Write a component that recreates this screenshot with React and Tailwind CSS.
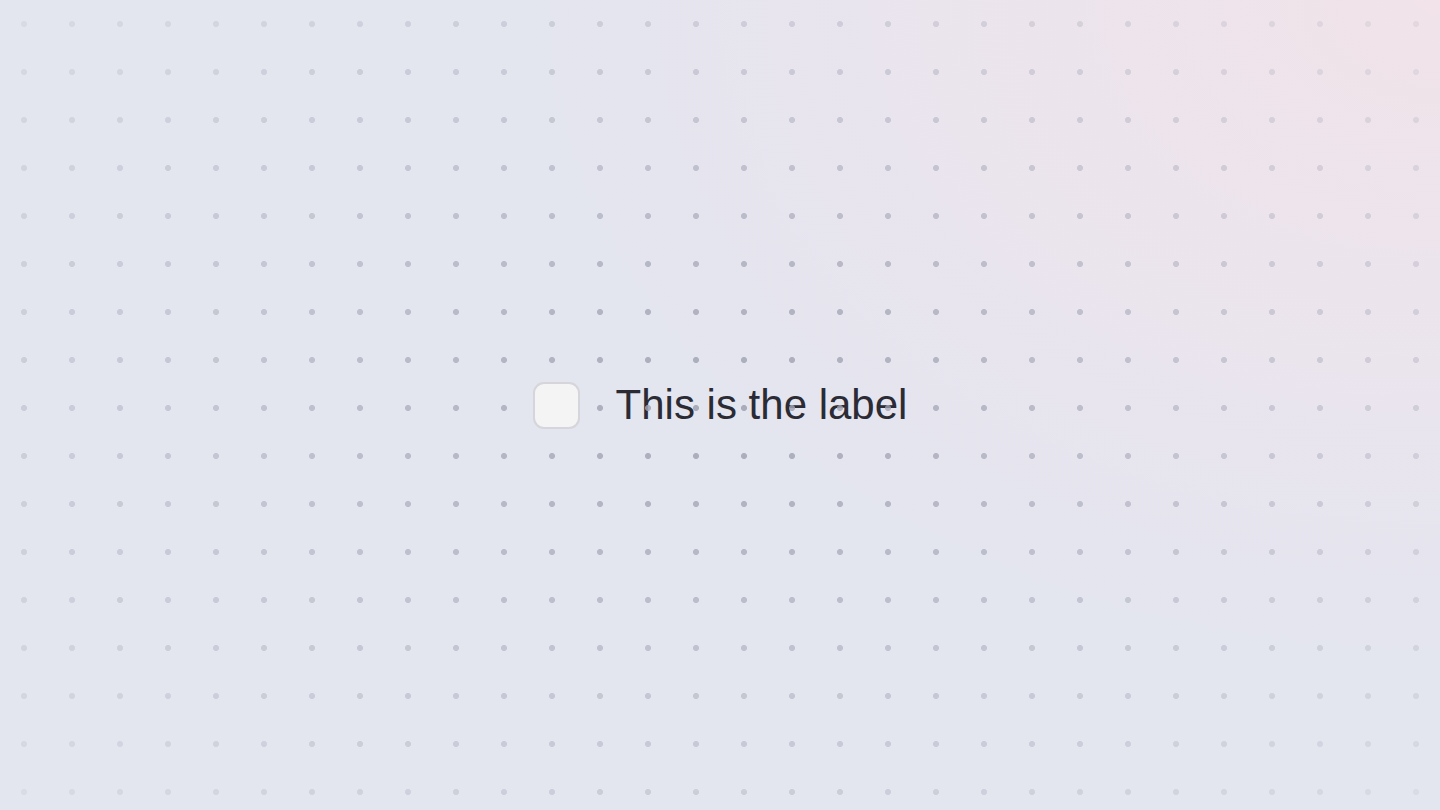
export default function App() {
  return (
    <div className="relative flex h-[810px] w-full items-center justify-center overflow-hidden bg-[#e3e5ef] font-['Liberation_Sans',Arial,sans-serif]">
      <div className="pointer-events-none absolute inset-0 bg-[radial-gradient(ellipse_85%_110%_at_100%_0%,#f1e3e9_0%,rgba(239,228,236,0.7)_35%,rgba(227,229,239,0)_75%)]" />

      <label className="relative flex cursor-pointer items-center gap-9">
        <input type="checkbox" className="peer sr-only" />
        <span className="relative z-10 block h-[47px] w-[47px] rounded-[11px] border-2 border-[#d5d5db] bg-[#f4f4f5]" />
        <span className="text-[42px] leading-none text-[#2b2b35]">This is the label</span>
      </label>

      {/* dot grid, faded toward the edges */}
      <div className="pointer-events-none absolute inset-0 bg-[radial-gradient(circle,rgba(160,162,178,0.85)_2.7px,transparent_3.3px)] bg-[length:48px_48px] [mask-image:radial-gradient(ellipse_at_center,#000_5%,rgba(0,0,0,0.55)_50%,rgba(0,0,0,0.15)_100%)]" />
    </div>
  );
}
